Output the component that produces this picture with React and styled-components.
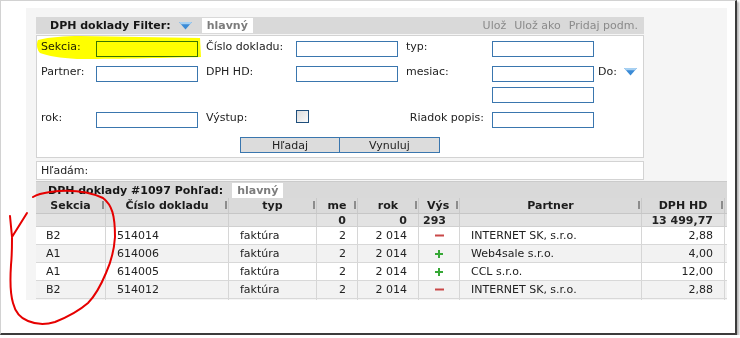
import React from 'react';
import styled, { createGlobalStyle } from 'styled-components';

const GlobalStyle = createGlobalStyle`
  body {
    margin: 0;
    background: #fff;
    font-family: "DejaVu Sans", Verdana, sans-serif;
    font-size: 11px;
    color: #222;
  }
`;

const COLS = '70px 123px 88px 41px 61px 41px 182px 83px 2px';

const rows = [
  { sekcia: 'B2', cislo: '514014', typ: 'faktúra', me: '2', rok: '2 014', out: false, partner: 'INTERNET SK, s.r.o.', dph: '2,88' },
  { sekcia: 'A1', cislo: '614006', typ: 'faktúra', me: '2', rok: '2 014', out: true, partner: 'Web4sale s.r.o.', dph: '4,00' },
  { sekcia: 'A1', cislo: '614005', typ: 'faktúra', me: '2', rok: '2 014', out: true, partner: 'CCL s.r.o.', dph: '12,00' },
  { sekcia: 'B2', cislo: '514012', typ: 'faktúra', me: '2', rok: '2 014', out: false, partner: 'INTERNET SK, s.r.o.', dph: '2,88' },
];

const DropArrow = () => (
  <svg width="13" height="8" viewBox="0 0 13 8">
    <path d="M0 0h13L6.5 7.5z" fill="#3b8bd6" />
    <path d="M0 0h13l-1.8 2.2H1.8z" fill="#a6d0f2" />
  </svg>
);

const Plus = () => (
  <svg width="8" height="8" viewBox="0 0 8 8">
    <path d="M3 0h2v3h3v2H5v3H3V5H0V3h3z" fill="#36a836" />
  </svg>
);

const Minus = () => (
  <svg width="9" height="3" viewBox="0 0 9 3">
    <rect x="0" y="0.5" width="9" height="2" fill="#c94848" />
  </svg>
);

const Frame = styled.div`
  position: relative;
  box-sizing: border-box;
  width: 737px;
  height: 335px;
  padding: 7px 0 0 25px;
  border: 1px solid #d2d2d2;
  border-right: 2px solid #3c3c3c;
  border-bottom: 2px solid #3c3c3c;
  box-shadow: 2px 2px 2px rgba(0, 0, 0, 0.3);
  background: #fff;
`;

const Panel = styled.div`
  box-sizing: border-box;
  width: 701px;
  height: 292px;
  padding: 9px 0 0 10px;
  background: #f5f5f5;
  display: flex;
  flex-direction: column;
  overflow: hidden;
`;

const Filter = styled.section`
  width: 608px;
  display: flex;
  flex-direction: column;
  gap: 1px;
`;

const Bar = styled.div`
  display: flex;
  align-items: center;
  height: ${p => p.$h || 17}px;
  padding-left: ${p => p.$pl || 14}px;
  padding-right: 6px;
  background: #d9d9d9;
  ${p => p.$line && 'border-top: 1px solid #cbcbcb;'}
`;

const BarTitle = styled.span`
  font-weight: bold;
  color: #161616;
  margin-right: 8px;
`;

const ViewTag = styled.span`
  display: inline-flex;
  align-items: center;
  height: 15px;
  margin-left: ${p => p.$ml || 10}px;
  padding: 0 5px;
  background: #fff;
  color: #7c7c7c;
  font-weight: bold;
`;

const BarLinks = styled.div`
  margin-left: auto;
  display: flex;
  gap: 8px;
  color: #8a8a8a;
`;

const FilterBody = styled.div`
  box-sizing: border-box;
  border: 1px solid #d3d3d3;
  background: #fff;
  padding: 5px 4px 4px;
`;

const FieldGrid = styled.div`
  display: grid;
  grid-template-columns: 55px 110px 90px 110px 86px 106px auto;
  row-gap: 9px;
  align-items: start;
`;

const Label = styled.div`
  line-height: 13px;
  margin-top: -1px;
  padding-right: ${p => (p.$right ? 8 : 0)}px;
  text-align: ${p => (p.$right ? 'right' : 'left')};
  color: #222;
  white-space: nowrap;
`;

const Input = styled.div`
  box-sizing: border-box;
  width: 102px;
  height: 16px;
  border: 1px solid #3a76ae;
  background: #fff;
`;

const InputStack = styled.div`
  display: flex;
  flex-direction: column;
  gap: 5px;
`;

const DoCell = styled.div`
  display: flex;
  align-items: center;
  gap: 7px;
  line-height: 13px;
  margin-top: -1px;
`;

const Check = styled.div`
  box-sizing: border-box;
  width: 13px;
  height: 13px;
  margin-top: -2px;
  border: 1px solid #1f4f7c;
  background: linear-gradient(135deg, #dcdcdc, #fbfbfb);
`;

const Buttons = styled.div`
  display: flex;
  justify-content: center;
  margin-top: 9px;
`;

const Button = styled.div`
  box-sizing: border-box;
  width: ${p => p.$w || 100}px;
  height: 16px;
  display: flex;
  align-items: center;
  justify-content: center;
  border: 1px solid #3a76ae;
  ${p => p.$joined && 'border-left: none;'}
  background: #dcdcdc;
  color: #222;
`;

const SearchBox = styled.div`
  box-sizing: border-box;
  height: 19px;
  margin-top: 2px;
  padding-left: 4px;
  display: flex;
  align-items: center;
  border: 1px solid #d3d3d3;
  background: #fff;
`;

const Table = styled.section`
  width: 691px;
  margin-top: 1px;
`;

const Row = styled.div`
  display: grid;
  grid-template-columns: ${COLS};
  height: ${p => p.$h}px;
  background: ${p => p.$bg};
  ${p => p.$bottom && `border-bottom: 1px solid ${p.$bottom};`}
  box-sizing: border-box;
`;

const HeadCell = styled.div`
  position: relative;
  padding: 0 8px;
  display: flex;
  align-items: center;
  justify-content: ${p => (p.$start ? 'flex-start' : 'center')};
  border-right: 1px solid #c9c9c9;
  font-weight: bold;
  color: #1c1c1c;
  overflow: hidden;
`;

const HeadLabel = styled.span`
  white-space: nowrap;
`;

const Grip = styled.span`
  position: absolute;
  right: 1px;
  top: 3px;
  width: 2px;
  height: 8px;
  background: #8c8c8c;
`;

const Cell = styled.div`
  box-sizing: border-box;
  display: flex;
  align-items: center;
  justify-content: ${p => (p.$align === 'right' ? 'flex-end' : p.$align === 'center' ? 'center' : 'flex-start')};
  padding: ${p => (p.$align === 'right' ? '0 11px 0 0' : p.$align === 'center' ? '0' : '0 0 0 11px')};
  border-right: 1px solid ${p => p.$line || '#d6d6d6'};
  font-weight: ${p => (p.$bold ? 'bold' : 'normal')};
  white-space: nowrap;
  overflow: hidden;
  color: #222;
`;

const Overlay = styled.svg`
  position: absolute;
  left: -1px;
  top: -1px;
  pointer-events: none;
  ${p => p.$multiply && 'mix-blend-mode: multiply;'}
`;

const headers = ['Sekcia', 'Číslo dokladu', 'typ', 'me', 'rok', 'Výs', 'Partner', 'DPH HD'];

const App = () => (
  <>
    <GlobalStyle />
    <Frame>
      <Panel>
        <Filter>
          <Bar>
            <BarTitle>DPH doklady Filter:</BarTitle>
            <DropArrow />
            <ViewTag>hlavný</ViewTag>
            <BarLinks>
              <span>Ulož</span>
              <span>Ulož ako</span>
              <span>Pridaj podm.</span>
            </BarLinks>
          </Bar>
          <FilterBody>
            <FieldGrid>
              <Label>Sekcia:</Label>
              <Input />
              <Label>Číslo dokladu:</Label>
              <Input />
              <Label>typ:</Label>
              <Input />
              <span />

              <Label>Partner:</Label>
              <Input />
              <Label>DPH HD:</Label>
              <Input />
              <Label>mesiac:</Label>
              <InputStack>
                <Input />
                <Input />
              </InputStack>
              <DoCell>
                Do:
                <DropArrow />
              </DoCell>

              <Label>rok:</Label>
              <Input />
              <Label>Výstup:</Label>
              <Check />
              <Label $right>Riadok popis:</Label>
              <Input />
              <span />
            </FieldGrid>
            <Buttons>
              <Button>Hľadaj</Button>
              <Button $joined>Vynuluj</Button>
            </Buttons>
          </FilterBody>
          <SearchBox>Hľadám:</SearchBox>
        </Filter>

        <Table>
          <Bar $h={16} $pl={12} $line>
            <BarTitle>DPH doklady #1097 Pohľad:</BarTitle>
            <ViewTag $ml={1}>hlavný</ViewTag>
          </Bar>
          <Row $h={16} $bg="#dadada" $bottom="#c6c6c6">
            {headers.map(h => (
              <HeadCell key={h} $start={h === 'Výs'}>
                <HeadLabel>{h}</HeadLabel>
                <Grip />
              </HeadCell>
            ))}
            <span />
          </Row>
          <Row $h={13} $bg="#e3e3e3" $bottom="#d0d0d0">
            <Cell $line="#cfcfcf" />
            <Cell $line="#cfcfcf" />
            <Cell $line="#cfcfcf" />
            <Cell $line="#cfcfcf" $align="right" $bold>0</Cell>
            <Cell $line="#cfcfcf" $align="right" $bold>0</Cell>
            <Cell $line="#cfcfcf" $bold style={{ paddingLeft: 4 }}>293</Cell>
            <Cell $line="#cfcfcf" />
            <Cell $line="#cfcfcf" $align="right" $bold>13 499,77</Cell>
            <span />
          </Row>
          {rows.map((r, i) => (
            <Row key={i} $h={18} $bg={i % 2 ? '#f2f2f2' : '#fff'} $bottom="#d8d8d8">
              <Cell style={{ paddingLeft: 10 }}>{r.sekcia}</Cell>
              <Cell>{r.cislo}</Cell>
              <Cell>{r.typ}</Cell>
              <Cell $align="right">{r.me}</Cell>
              <Cell $align="right">{r.rok}</Cell>
              <Cell $align="center">{r.out ? <Plus /> : <Minus />}</Cell>
              <Cell>{r.partner}</Cell>
              <Cell $align="right">{r.dph}</Cell>
              <span />
            </Row>
          ))}
          <Row $h={4} $bg="transparent">
            {headers.map(h => (
              <Cell key={h} />
            ))}
          </Row>
        </Table>
      </Panel>

      <Overlay $multiply width="740" height="338" viewBox="0 0 740 338">
        <path
          d="M38 40 C50 37, 65 36, 80 36 L200 38 L201 57 C160 58, 110 59, 77 59 C60 58, 48 56, 40 53 C37 50, 36 44, 38 40 Z"
          fill="#ffff00"
        />
      </Overlay>
      <Overlay width="740" height="338" viewBox="0 0 740 338">
        <path
          d="M33 197 C38 194, 43 193, 50 192 C65 190, 85 190, 103 198 C112 205, 115 215, 115 237 C114 252, 111 262, 106 273 C101 285, 96 295, 88 303 C80 310, 70 316, 55 322 C45 325, 35 324, 28 321 C20 318, 15 311, 13 303 C10 293, 10 280, 11 265 C12 255, 12 246, 12 238"
          fill="none"
          stroke="#e60000"
          strokeWidth="2"
          strokeLinecap="round"
        />
        <path d="M10 216 L12 237 L27 213" fill="none" stroke="#e60000" strokeWidth="2" strokeLinecap="round" strokeLinejoin="round" />
      </Overlay>
    </Frame>
  </>
);

export default App;
